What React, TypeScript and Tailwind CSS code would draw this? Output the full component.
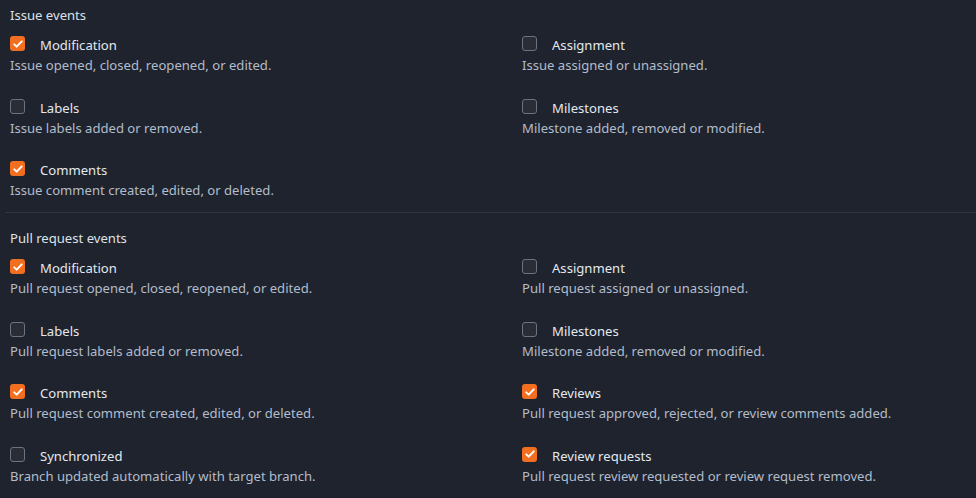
type EventItem = {
  label: string;
  desc: string;
  checked: boolean;
};

const issueEvents: EventItem[] = [
  { label: "Modification", desc: "Issue opened, closed, reopened, or edited.", checked: true },
  { label: "Assignment", desc: "Issue assigned or unassigned.", checked: false },
  { label: "Labels", desc: "Issue labels added or removed.", checked: false },
  { label: "Milestones", desc: "Milestone added, removed or modified.", checked: false },
  { label: "Comments", desc: "Issue comment created, edited, or deleted.", checked: true },
];

const pullEvents: EventItem[] = [
  { label: "Modification", desc: "Pull request opened, closed, reopened, or edited.", checked: true },
  { label: "Assignment", desc: "Pull request assigned or unassigned.", checked: false },
  { label: "Labels", desc: "Pull request labels added or removed.", checked: false },
  { label: "Milestones", desc: "Milestone added, removed or modified.", checked: false },
  { label: "Comments", desc: "Pull request comment created, edited, or deleted.", checked: true },
  { label: "Reviews", desc: "Pull request approved, rejected, or review comments added.", checked: true },
  { label: "Synchronized", desc: "Branch updated automatically with target branch.", checked: false },
  { label: "Review requests", desc: "Pull request review requested or review request removed.", checked: true },
];

function Checkbox({ checked }: { checked: boolean }) {
  if (checked) {
    return (
      <span className="mt-[2px] flex h-[15px] w-[15px] shrink-0 items-center justify-center rounded-[3px] bg-[#f26f21]">
        <svg viewBox="0 0 16 16" className="h-[12px] w-[12px]" fill="none">
          <path d="M3 8.5l3.2 3L13 4.5" stroke="#ffffff" strokeWidth="2.6" strokeLinecap="round" strokeLinejoin="round" />
        </svg>
      </span>
    );
  }
  return <span className="mt-[2px] h-[15px] w-[15px] shrink-0 rounded-[3px] border border-[#6b7280] bg-[#2a2d35]" />;
}

function EventRow({ item }: { item: EventItem }) {
  return (
    <div className="flex flex-col">
      <label className="flex h-[20px] items-start gap-[15px] text-[#e4e8ee]">
        <Checkbox checked={item.checked} />
        <span className="pt-[1px] leading-[20px]">{item.label}</span>
      </label>
      <p className="h-[20px] pt-[1px] leading-[20px] text-[#b3bccb]">{item.desc}</p>
    </div>
  );
}

function EventSection({ title, items }: { title: string; items: EventItem[] }) {
  return (
    <div className="flex flex-col gap-[10px] pl-[10px]">
      <h4 className="h-[20px] pt-[1px] leading-[20px] text-[#dde2e9]">{title}</h4>
      <div className="grid grid-cols-[512px_1fr] gap-y-[22.5px]">
        {items.map((item, i) => (
          <EventRow key={i} item={item} />
        ))}
      </div>
    </div>
  );
}

export default function App() {
  return (
    <div className="h-[498px] w-[976px] overflow-hidden bg-[#1e232d] pt-[4px] text-[13.1px] font-['Noto_Sans',sans-serif]">
      <EventSection title="Issue events" items={issueEvents} />
      <div className="ml-[5px] mt-[13px] mb-[14px] h-px bg-[#2e3542]" />
      <EventSection title="Pull request events" items={pullEvents} />
    </div>
  );
}
